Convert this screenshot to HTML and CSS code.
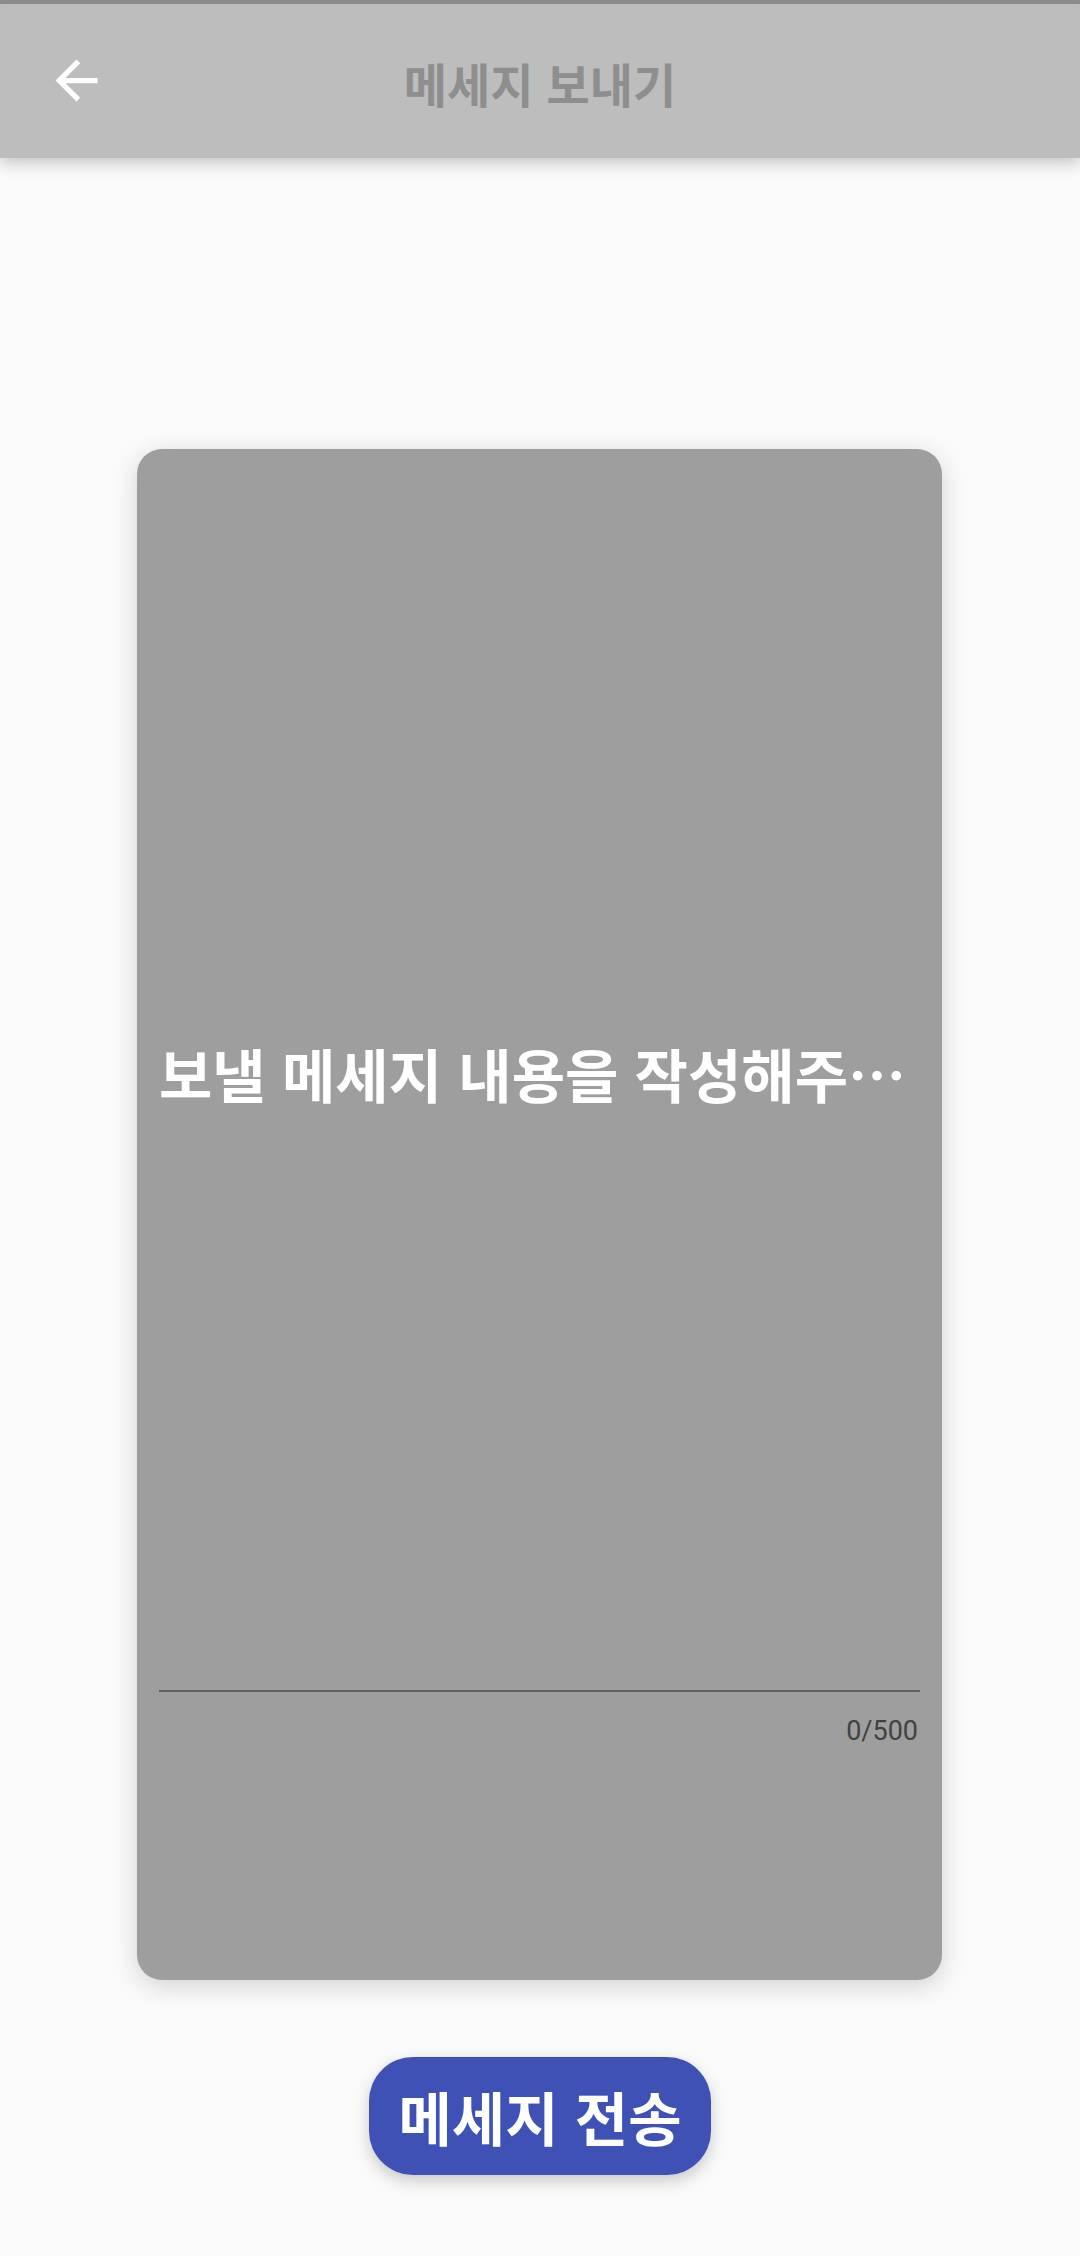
FILE: index.html
```html
<!DOCTYPE html>
<html lang="ko">
<head>
    <meta charset="UTF-8">
    <meta name="viewport" content="width=device-width, initial-scale=1.0">
    <title>메세지 보내기</title>
    <link rel="stylesheet" href="styles.css">
</head>
<body>
    <div class="status-bar"></div>
    <header class="app-bar">
        <button class="back-btn" type="button" aria-label="뒤로">
            <svg viewBox="0 0 24 24" width="63" height="63">
                <path d="M20 11H7.83l5.59-5.59L12 4l-8 8 8 8 1.41-1.41L7.83 13H20v-2z" fill="#ffffff"/>
            </svg>
        </button>
        <h1 class="app-title">메세지 보내기</h1>
    </header>

    <main class="content">
        <div class="message-card">
            <div class="field">
                <div class="field-input">
                    <span class="hint">보낼 메세지 내용을 작성해주세요</span>
                </div>
                <div class="counter">0/500</div>
            </div>
        </div>

        <button type="button" class="send-btn">메세지 전송</button>
    </main>
</body>
</html>
```

FILE: styles.css
```css
html, body {
    margin: 0;
    padding: 0;
}
body {
    font-family: "Noto Sans CJK KR", "Noto Sans", Roboto, sans-serif;
    background-color: #fafafa;
    width: 1080px;
    height: 2256px;
    overflow: hidden;
}
.status-bar {
    height: 4px;
    background-color: #8f8f8f;
}
.app-bar {
    position: relative;
    height: 154px;
    background-color: #bdbdbd;
    box-shadow: 0 6px 14px rgba(0, 0, 0, 0.2);
    display: flex;
    align-items: center;
    justify-content: center;
    z-index: 2;
}
.back-btn {
    position: absolute;
    left: 45px;
    top: 45px;
    width: 63px;
    height: 63px;
    padding: 0;
    border: none;
    background: none;
}
.back-btn svg { display: block; }
.app-title {
    margin: 0;
    font-size: 47px;
    font-weight: bold;
    color: #8e8e8e;
    line-height: 60px;
    padding-top: 4px;
}
.content {
    display: flex;
    flex-direction: column;
    align-items: center;
    padding-top: 291px;
}
.message-card {
    width: 805px;
    height: 1531px;
    box-sizing: border-box;
    margin-left: -1px;
    padding: 589px 22px 0 22px;
    background-color: #9e9e9e;
    border-radius: 25px;
    box-shadow: 0 6px 24px rgba(0, 0, 0, 0.16);
}
.field-input {
    height: 652px;
    border-bottom: 2px solid #616161;
}
.hint {
    display: block;
    font-size: 58px;
    font-weight: bold;
    line-height: 70px;
    color: #ffffff;
    white-space: nowrap;
    overflow: hidden;
    text-overflow: ellipsis;
}
.counter {
    margin-top: 24px;
    font-family: Roboto, "Noto Sans", sans-serif;
    font-size: 27px;
    line-height: 30px;
    color: #424242;
    text-align: right;
    padding-right: 2px;
}
.send-btn {
    margin-top: 77px;
    height: 118px;
    padding: 0 29px;
    border: none;
    border-radius: 44px;
    background-color: #3f51b5;
    color: #ffffff;
    font-family: "Noto Sans CJK KR", "Noto Sans", sans-serif;
    font-size: 58px;
    font-weight: bold;
    box-shadow: 0 6px 16px rgba(0, 0, 0, 0.2);
}
```
